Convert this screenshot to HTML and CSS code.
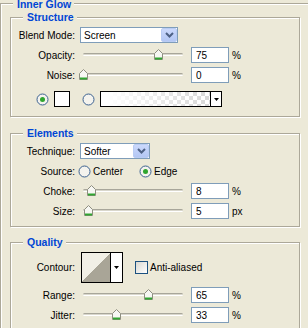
FILE: index.html
```html
<!DOCTYPE html>
<html lang="en">
<head>
    <meta charset="UTF-8">
    <title>Inner Glow</title>
    <link rel="stylesheet" href="styles.css">
</head>
<body>

    <fieldset class="panel">
        <legend>Inner Glow</legend>

        <fieldset class="group structure">
            <legend>Structure</legend>
            <div class="row">
                <label class="lbl">Blend Mode:</label>
                <div class="combo blend">
                    <span class="val">Screen</span>
                    <span class="drop"><svg width="9" height="6" viewBox="0 0 9 6"><path d="M1 1L4.5 4.5L8 1" fill="none" stroke="#4d6185" stroke-width="2"/></svg></span>
                </div>
            </div>
            <div class="row">
                <label class="lbl">Opacity:</label>
                <div class="slider">
                    <span class="thumb" style="left: 75%"><svg width="9" height="11" viewBox="0 0 9 11"><path d="M0.5 10.5V4.5L4.5 0.5L8.5 4.5V10.5Z" fill="#f7f7f3" stroke="#8e8e80"/><path d="M1 9.5H8" stroke="#31a531" stroke-width="2"/></svg></span>
                </div>
                <input class="num" type="text" value="75"><span class="unit">%</span>
            </div>
            <div class="row">
                <label class="lbl">Noise:</label>
                <div class="slider">
                    <span class="thumb" style="left: 0%"><svg width="9" height="11" viewBox="0 0 9 11"><path d="M0.5 10.5V4.5L4.5 0.5L8.5 4.5V10.5Z" fill="#f7f7f3" stroke="#8e8e80"/><path d="M1 9.5H8" stroke="#31a531" stroke-width="2"/></svg></span>
                </div>
                <input class="num" type="text" value="0"><span class="unit">%</span>
            </div>
            <div class="row colors">
                <svg class="radio" width="13" height="13" viewBox="0 0 13 13"><circle cx="6.5" cy="6.5" r="5.5" fill="#f4f3ee" stroke="#3b6190"/><circle cx="6.5" cy="6.5" r="2.5" fill="#2fa52f"/></svg>
                <span class="swatch"></span>
                <svg class="radio second" width="13" height="13" viewBox="0 0 13 13"><circle cx="6.5" cy="6.5" r="5.5" fill="#f4f3ee" stroke="#3b6190"/></svg>
                <div class="gradpick">
                    <span class="ramp"></span>
                    <span class="arrow"><svg width="5" height="3" viewBox="0 0 5 3"><path d="M0 0H5L2.5 3Z" fill="#000"/></svg></span>
                </div>
            </div>
        </fieldset>

        <fieldset class="group elements">
            <legend>Elements</legend>
            <div class="row">
                <label class="lbl">Technique:</label>
                <div class="combo technique">
                    <span class="val">Softer</span>
                    <span class="drop"><svg width="9" height="6" viewBox="0 0 9 6"><path d="M1 1L4.5 4.5L8 1" fill="none" stroke="#4d6185" stroke-width="2"/></svg></span>
                </div>
            </div>
            <div class="row source">
                <label class="lbl">Source:</label>
                <svg class="radio" width="13" height="13" viewBox="0 0 13 13"><circle cx="6.5" cy="6.5" r="5.5" fill="#f4f3ee" stroke="#3b6190"/></svg>
                <span class="opt">Center</span>
                <svg class="radio edge" width="13" height="13" viewBox="0 0 13 13"><circle cx="6.5" cy="6.5" r="5.5" fill="#f4f3ee" stroke="#3b6190"/><circle cx="6.5" cy="6.5" r="2.5" fill="#2fa52f"/></svg>
                <span class="opt">Edge</span>
            </div>
            <div class="row choke">
                <label class="lbl">Choke:</label>
                <div class="slider">
                    <span class="thumb" style="left: 8%"><svg width="9" height="11" viewBox="0 0 9 11"><path d="M0.5 10.5V4.5L4.5 0.5L8.5 4.5V10.5Z" fill="#f7f7f3" stroke="#8e8e80"/><path d="M1 9.5H8" stroke="#31a531" stroke-width="2"/></svg></span>
                </div>
                <input class="num" type="text" value="8"><span class="unit">%</span>
            </div>
            <div class="row">
                <label class="lbl">Size:</label>
                <div class="slider">
                    <span class="thumb" style="left: 5%"><svg width="9" height="11" viewBox="0 0 9 11"><path d="M0.5 10.5V4.5L4.5 0.5L8.5 4.5V10.5Z" fill="#f7f7f3" stroke="#8e8e80"/><path d="M1 9.5H8" stroke="#31a531" stroke-width="2"/></svg></span>
                </div>
                <input class="num" type="text" value="5"><span class="unit">px</span>
            </div>
        </fieldset>

        <fieldset class="group quality">
            <legend>Quality</legend>
            <div class="row contour-row">
                <label class="lbl">Contour:</label>
                <div class="contour">
                    <span class="curve"></span>
                    <span class="arrow"><svg width="5" height="3" viewBox="0 0 5 3"><path d="M0 0H5L2.5 3Z" fill="#000"/></svg></span>
                </div>
                <span class="check"></span>
                <span class="opt">Anti-aliased</span>
            </div>
            <div class="row">
                <label class="lbl">Range:</label>
                <div class="slider">
                    <span class="thumb" style="left: 65%"><svg width="9" height="11" viewBox="0 0 9 11"><path d="M0.5 10.5V4.5L4.5 0.5L8.5 4.5V10.5Z" fill="#f7f7f3" stroke="#8e8e80"/><path d="M1 9.5H8" stroke="#31a531" stroke-width="2"/></svg></span>
                </div>
                <input class="num" type="text" value="65"><span class="unit">%</span>
            </div>
            <div class="row">
                <label class="lbl">Jitter:</label>
                <div class="slider">
                    <span class="thumb" style="left: 33%"><svg width="9" height="11" viewBox="0 0 9 11"><path d="M0.5 10.5V4.5L4.5 0.5L8.5 4.5V10.5Z" fill="#f7f7f3" stroke="#8e8e80"/><path d="M1 9.5H8" stroke="#31a531" stroke-width="2"/></svg></span>
                </div>
                <input class="num" type="text" value="33"><span class="unit">%</span>
            </div>
        </fieldset>
    </fieldset>

</body>
</html>
```

FILE: styles.css
```css
body {
    margin: 0;
    background: #ece9d8;
    font-family: "Liberation Sans", Arial, sans-serif;
    font-size: 10px;
    color: #000;
    overflow: hidden;
}
fieldset {
    margin: 0;
    border: 1px solid #aca899;
    box-shadow: inset 1px 1px 0 #fff, 1px 1px 0 #fff;
    box-sizing: border-box;
    min-inline-size: 0;
}
legend {
    font-size: 10.5px;
    font-weight: bold;
    line-height: 13px;
    color: #0046d5;
    background: #ece9d8;
    padding: 0 3px 0 4px;
}
.panel {
    width: 340px;
    margin-top: -4px;
    padding: 0 0 20px 9px;
}
.panel > legend {
    margin-left: 3px;
    padding-top: 2px;
}
.group {
    width: 290px;
    padding: 3px 0 9px 0;
}
.group > legend {
    margin-left: 12px;
}
.elements {
    margin-top: 10px;
    padding-bottom: 7px;
}
.quality {
    margin-top: 9px;
    padding-bottom: 10px;
}
.row {
    display: flex;
    align-items: center;
    height: 16px;
    margin-top: 4px;
}
legend + .row {
    margin-top: 0;
}
.lbl {
    width: 64px;
    margin-right: 5px;
    text-align: right;
}

/* combo boxes */
.combo {
    display: flex;
    align-items: center;
    height: 16px;
    box-sizing: border-box;
    border: 1px solid #7f9db9;
    background: #fff;
    padding-left: 3px;
}
.combo .val {
    flex: 1;
}
.combo .drop {
    display: flex;
    align-items: center;
    justify-content: center;
    width: 16px;
    height: 14px;
    box-sizing: border-box;
    border: 1px solid #b9ccf4;
    border-radius: 2px;
    background: linear-gradient(#cbd9fc, #b3c7f4);
}
.blend {
    width: 98px;
}
.technique {
    width: 70px;
}

/* sliders */
.slider {
    position: relative;
    width: 100px;
    height: 16px;
    margin: 0 3px;
}
.slider::before {
    content: "";
    position: absolute;
    left: 0;
    right: 0;
    top: 6px;
    height: 3px;
    box-sizing: border-box;
    border-radius: 2px;
    border-top: 1px solid #a8a69a;
    border-bottom: 1px solid #fff;
    background: #d9d7cc;
}
.thumb {
    position: absolute;
    top: 2px;
    margin-left: -4px;
    width: 9px;
    height: 11px;
}
.thumb svg {
    display: block;
}
.num {
    width: 38px;
    height: 16px;
    box-sizing: border-box;
    margin: 0 0 0 5px;
    padding: 0 0 0 4px;
    border: 1px solid #7f9db9;
    background: #fff;
    font: inherit;
    color: #000;
}
.unit {
    margin-left: 3px;
}

/* color choice */
.colors {
    margin-top: 8px;
    padding-left: 25px;
}
.radio {
    display: block;
    flex: none;
}
.swatch {
    width: 16px;
    height: 16px;
    box-sizing: border-box;
    margin-left: 5px;
    border: 1px solid #000;
    background: #fff;
}
.radio.second {
    margin-left: 12px;
}
.gradpick {
    display: flex;
    width: 122px;
    height: 16px;
    box-sizing: border-box;
    margin-left: 5px;
    border: 1px solid #000;
}
.gradpick .ramp {
    flex: 1;
    background:
        linear-gradient(to right, #fff 5%, rgba(255,255,255,0)),
        conic-gradient(#d8d8d8 25%, #fff 0 50%, #d8d8d8 0 75%, #fff 0) 0 0 / 8px 8px;
}
.arrow {
    display: flex;
    align-items: center;
    justify-content: center;
    width: 10px;
    border-left: 1px solid #000;
    background: #fff;
}

/* source radios */
.source .lbl {
    margin-right: 3px;
}
.opt {
    margin-left: 2px;
}
.radio.edge {
    margin-left: 16px;
}

/* contour */
.row.contour-row {
    height: 31px;
}
.contour {
    display: flex;
    width: 42px;
    height: 31px;
    box-sizing: border-box;
    margin-left: 1px;
    border: 1px solid #000;
}
.contour .curve {
    flex: 1;
    background: linear-gradient(to top left, #a9a597 50%, #f1efe6 50%);
}
.contour .arrow {
    width: 11px;
}
.check {
    width: 13px;
    height: 13px;
    box-sizing: border-box;
    margin-left: 12px;
    border: 1px solid #1c5180;
    background: linear-gradient(135deg, #d9d8d1, #fff);
}
```
